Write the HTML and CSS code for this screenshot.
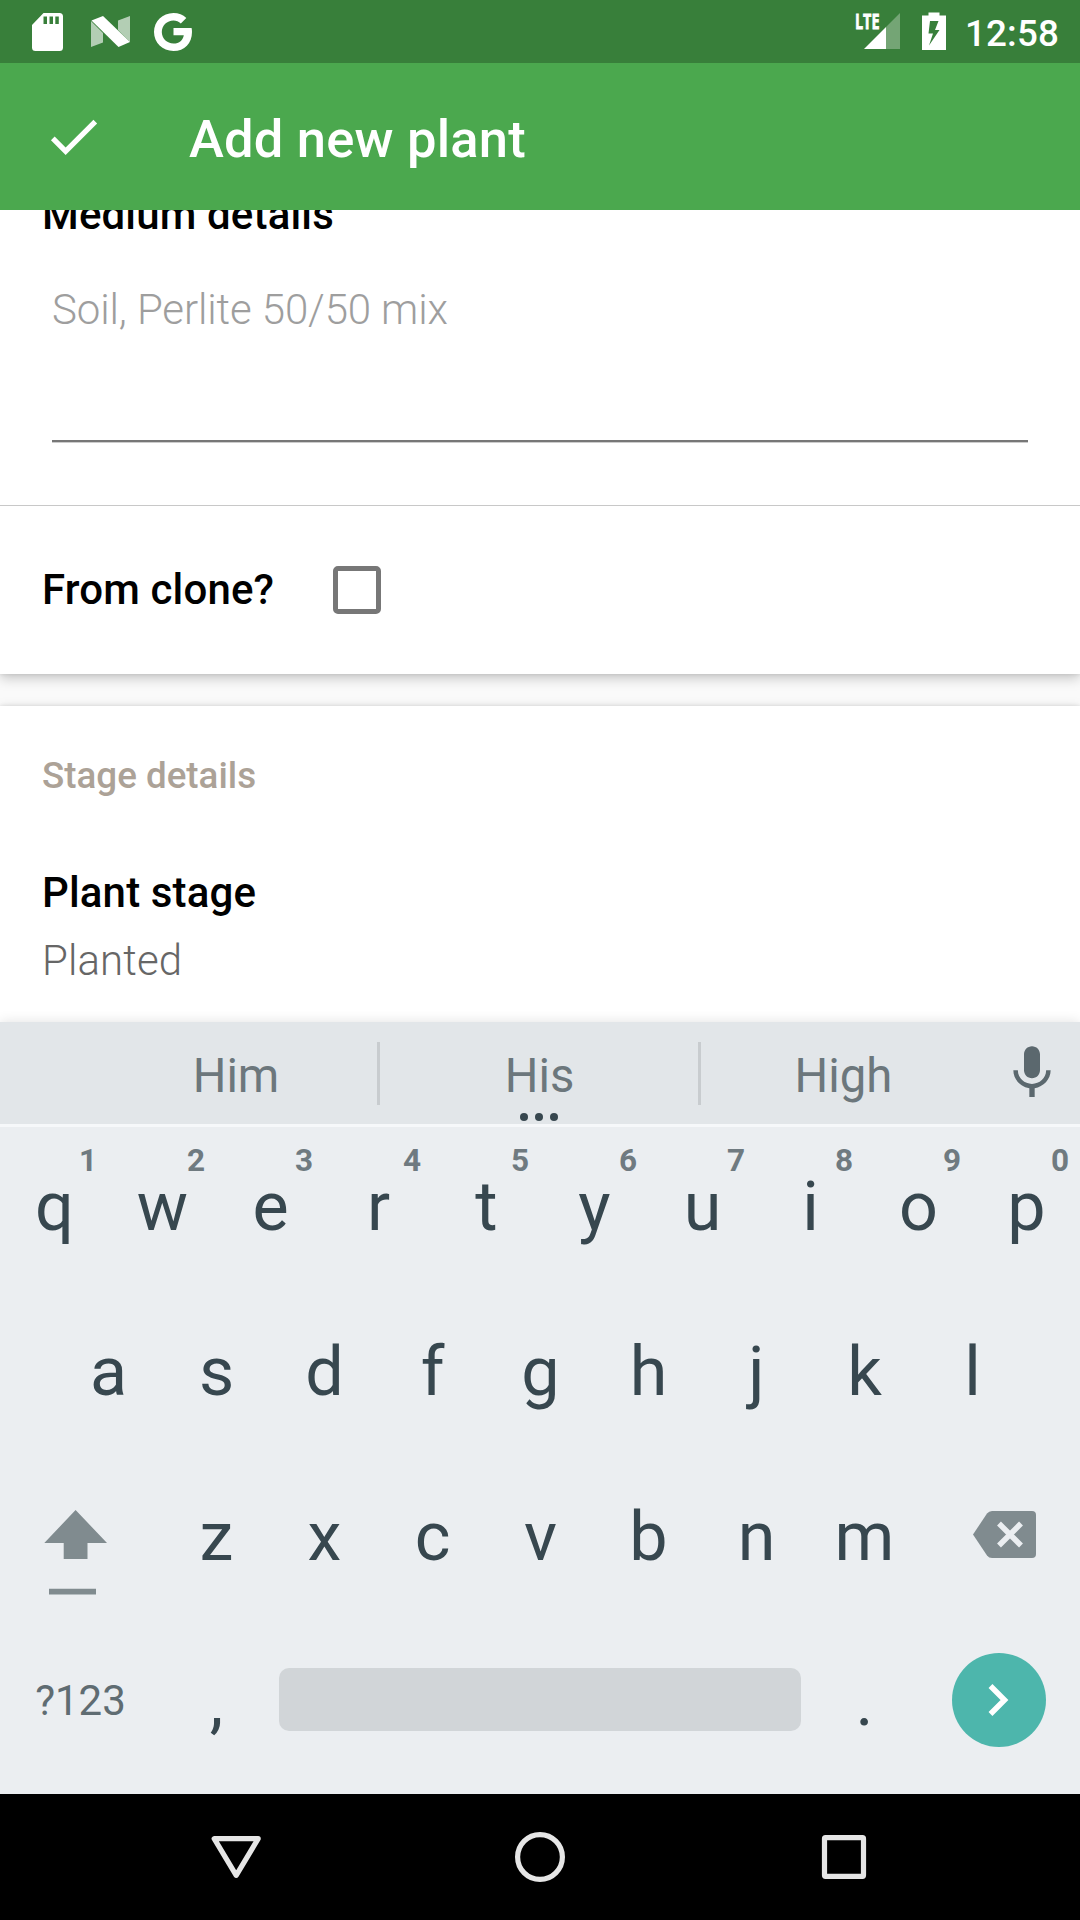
FILE: index.html
```html
<!DOCTYPE html>
<html lang="en">
<head>
<meta charset="utf-8">
<title>Add new plant</title>
<link rel="stylesheet" href="styles.css">
</head>
<body>
<div class="screen">
  <div class="status-bar">
    <svg class="status-left" width="200" height="63" viewBox="0 0 200 63" fill="#fff">
      <path fill-rule="evenodd" d="M43.500 13H59.500Q63 13 63 16.500V47.500Q63 51 59.500 51H35.500Q32 51 32 47.500V25ZM43.500 16.500V24H47V16.500ZM49.500 16.500V24H53V16.500ZM55.300 16.500V24H58.800V16.500Z"/>
      <path opacity=".62" d="M91 21L103 33V42.500L91 47ZM118 20.500L130 16V42L118 30Z"/>
      <path d="M91.500 20.500L103 16L130 42L118.500 47Z"/>
      <path d="M173.500 28H191.600Q192 30 192 32C192 43.500 184.500 51 173.500 51C162.500 51 154 42.500 154 32C154 21.500 162.500 13 173.500 13C178.500 13 183 14.800 186.300 18L180.800 23.500C178.800 21.500 176.300 20.500 173.500 20.500C167 20.500 161.800 25.500 161.800 32C161.800 38.500 167 43.500 173.500 43.500C179.500 43.500 183 40 183.800 35.200H173.500Z"/>
    </svg>
    <div class="status-right">
      <svg width="100" height="63" viewBox="0 0 100 63" fill="#fff">
        <text class="lte" x="5" y="29" textLength="24.500" lengthAdjust="spacingAndGlyphs">LTE</text>
        <path opacity=".3" d="M36 27L50 13V49H36Z"/>
        <path d="M14 49L36 27V49Z"/>
        <path fill-rule="evenodd" d="M78.500 12.500H89.500V15.500H96V50H72V15.500H78.500ZM80 21L78.500 33.500H83L79 45.500L89.500 30H85L88.500 21Z"/>
      </svg>
      <span class="clock">12:58</span>
    </div>
  </div>
  <header class="app-bar">
    <svg width="63" height="63" viewBox="0 0 24 24" fill="#fff"><path d="M9 16.170L4.830 12l-1.420 1.410L9 19 21 7l-1.410-1.410z"/></svg>
    <h1 class="title">Add new plant</h1>
  </header>
  <main class="form">
    <section class="card card-medium">
      <div class="label">Medium details</div>
      <div class="input">Soil, Perlite 50/50 mix</div>
      <div class="clone-row">
        <span class="label clone-label">From clone?</span>
        <span class="checkbox"></span>
      </div>
    </section>
    <section class="card card-stage">
      <h2 class="heading">Stage details</h2>
      <div class="label">Plant stage</div>
      <div class="value">Planted</div>
    </section>
  </main>
  <div class="keyboard">
    <div class="suggestions">
      <span class="suggestion first">Him</span>
      <span class="suggestion middle">His
        <svg class="more" width="40" height="10" viewBox="0 0 40 10"><circle cx="5" cy="5" r="4"/><circle cx="20" cy="5" r="4"/><circle cx="35" cy="5" r="4"/></svg>
      </span>
      <span class="suggestion last">High</span>
      <svg class="mic" width="64" height="64" viewBox="0 0 24 24"><path d="M12 14c1.660 0 3-1.340 3-3V5c0-1.660-1.340-3-3-3S9 3.340 9 5v6c0 1.660 1.340 3 3 3zm5.300-3c0 3-2.540 5.100-5.300 5.100S6.700 14 6.700 11H5c0 3.410 2.720 6.230 6 6.720V21h2v-3.280c3.280-.48 6-3.300 6-6.720h-1.700z"/></svg>
    </div>
    <div class="keys">
      <div class="row">
        <span class="key">q<sup class="hint">1</sup></span><span class="key">w<sup class="hint">2</sup></span><span class="key">e<sup class="hint">3</sup></span><span class="key">r<sup class="hint">4</sup></span><span class="key">t<sup class="hint">5</sup></span><span class="key">y<sup class="hint">6</sup></span><span class="key">u<sup class="hint">7</sup></span><span class="key">i<sup class="hint">8</sup></span><span class="key">o<sup class="hint">9</sup></span><span class="key">p<sup class="hint">0</sup></span>
      </div>
      <div class="row">
        <span class="key">a</span><span class="key">s</span><span class="key">d</span><span class="key">f</span><span class="key">g</span><span class="key">h</span><span class="key">j</span><span class="key">k</span><span class="key">l</span>
      </div>
      <div class="row">
        <svg class="wide-key" width="162" height="165" viewBox="0 0 162 165" fill="#808b8f"><path d="M75.600 53L107 86H87.500V102H63.700V86H44.300ZM49 131.700H96V137.500H49Z"/></svg>
        <span class="key">z</span><span class="key">x</span><span class="key">c</span><span class="key">v</span><span class="key">b</span><span class="key">n</span><span class="key">m</span>
        <svg class="wide-key" width="162" height="165" viewBox="0 0 162 165"><path fill="#808b8f" d="M55 77.500L69 56.500Q71 54 74 54H114Q118 54 118 58V97Q118 101 114 101H74Q71 101 69 98.500Z"/><path fill="none" stroke="#ebeef1" stroke-width="5.500" d="M81 66.500L103 88.500M103 66.500L81 88.500"/></svg>
      </div>
      <div class="row">
        <span class="symbols">?123</span>
        <span class="key">,</span>
        <span class="space"></span>
        <span class="key">.</span>
        <svg class="wide-key enter" width="162" height="165" viewBox="0 0 162 165"><circle cx="81" cy="78" r="47" fill="#4db6ac"/><path fill="none" stroke="#fff" stroke-width="5.500" d="M72.500 64L86.500 78L72.500 92"/></svg>
      </div>
    </div>
  </div>
  <nav class="nav-bar">
    <svg width="1080" height="126" viewBox="0 0 1080 126" fill="none" stroke="#e6e6e6" stroke-width="5.200" stroke-linejoin="round">
      <path d="M214.200 44.700H258.200L236.200 81.300Z"/>
      <circle cx="540" cy="63" r="22.400"/>
      <rect x="824.500" y="43.700" width="39" height="38.600" rx="1"/>
    </svg>
  </nav>
</div>
</body>
</html>
```
FILE: styles.css
```css
* { box-sizing: border-box; }
body { margin: 0; font-family: Roboto, "Noto Sans", sans-serif; }
svg { display: block; flex: none; }
h1, h2 { margin: 0; }

.screen { width: 1080px; height: 1920px; display: flex; flex-direction: column; overflow: hidden; }

.status-bar { height: 63px; flex: none; display: flex; justify-content: space-between; background: #387f3a; color: #fff; }
.status-right { display: flex; padding-right: 21px; }
.lte { font-family: "Open Sans", sans-serif; font-weight: 700; font-size: 22px; stroke: #fff; stroke-width: .8px; }
.clock { width: 94px; margin-left: 15px; font-size: 36.75px; font-weight: 500; line-height: 67px; letter-spacing: .15px; white-space: nowrap; }

.app-bar { height: 147px; flex: none; display: flex; align-items: center; gap: 84px; padding: 0 42px; background: #4ba84e; color: #fff; position: relative; z-index: 1; }
.title { font-size: 52.5px; font-weight: 500; line-height: 62px; letter-spacing: .2px; padding-top: 4px; }

.form { height: 812px; flex: none; overflow: hidden; background: #fafafa; }
.card { background: #fff; box-shadow: 0 4px 12px rgba(0, 0, 0, .22), 0 0 4px rgba(0, 0, 0, .1); }
.card-medium { height: 484px; margin-top: -20px; }
.label { font-size: 42px; font-weight: 500; line-height: 50px; letter-spacing: .15px; color: #000; padding-left: 42px; }
.input { height: 157px; margin: 45px 52px 63px; border-bottom: 2px solid #777; box-shadow: 0 1px #ccc; font-size: 42px; font-weight: 300; line-height: 50px; letter-spacing: -.12px; color: #9e9e9e; }
.clone-row { height: 169px; display: flex; align-items: center; border-top: 1px solid #c8c8c8; }
.clone-label { width: 333px; }
.checkbox { width: 48px; height: 48px; border: 5px solid #777; border-radius: 5px; }
.card-stage { height: 400px; margin-top: 32px; padding-top: 48px; }
.heading { font-size: 36.75px; font-weight: 500; line-height: 44px; color: #aca297; padding-left: 42px; margin-bottom: 70px; }
.value { margin-top: 18px; padding-left: 42px; font-size: 42px; font-weight: 300; line-height: 50px; letter-spacing: .1px; color: #666; }

.keyboard { height: 772px; flex: none; position: relative; background: #ebeef1; box-shadow: 0 0 12px rgba(0, 0, 0, .12); }
.suggestions { height: 105px; display: flex; background: #e2e6e9; border-bottom: 3px solid #f6f8fa; font-size: 47.25px; line-height: 109px; text-align: center; color: #6c777c; }
.suggestion { flex: none; }
.first { width: 283px; margin-left: 94px; padding-left: 1px; }
.middle { width: 324px; position: relative; border: solid #c8cccf; border-width: 0 3px; border-image: linear-gradient(transparent 20px, #c8cccf 20px, #c8cccf 83px, transparent 83px) 0 3; padding-left: 1px; }
.more { position: absolute; left: 139px; top: 90px; fill: #37474f; }
.last { width: 284px; padding-left: 1px; }
.mic { margin: 19px 0 0 15px; fill: #5b686e; }

.row { height: 165px; display: flex; justify-content: center; }
.key { width: 108px; flex: none; position: relative; text-align: center; font-size: 68.25px; line-height: 160px; padding-left: 1px; color: #37474f; }
.hint { position: absolute; right: 11px; top: 15px; font-size: 31.5px; font-weight: 700; line-height: 38px; color: #6f7a80; }
.symbols { width: 162px; flex: none; padding-right: 1px; font-size: 42px; line-height: 157px; text-align: center; color: #5f6c72; }
.space { width: 522px; height: 63px; margin: 46px 9px 0; border-radius: 10px; background: #d1d5d8; }

.nav-bar { height: 126px; flex: none; background: #000; }
```
